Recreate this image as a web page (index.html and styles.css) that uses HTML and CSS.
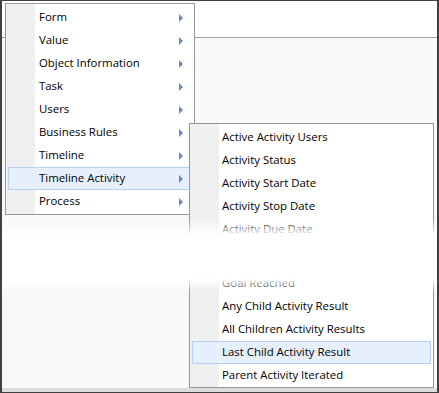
FILE: index.html
```html
<!DOCTYPE html>
<html>
<head>
<meta charset="utf-8">
<link rel="stylesheet" href="styles.css">
</head>
<body>
<div class="window">
  <div class="header"></div>
  <div class="content"></div>
  <div class="statusbar"></div>

  <div class="menu main-menu">
    <div class="item"><span class="label">Form</span><span class="arrow"></span></div>
    <div class="item"><span class="label">Value</span><span class="arrow"></span></div>
    <div class="item"><span class="label">Object Information</span><span class="arrow"></span></div>
    <div class="item"><span class="label">Task</span><span class="arrow"></span></div>
    <div class="item"><span class="label">Users</span><span class="arrow"></span></div>
    <div class="item"><span class="label">Business Rules</span><span class="arrow"></span></div>
    <div class="item"><span class="label">Timeline</span><span class="arrow"></span></div>
    <div class="item active"><span class="label">Timeline Activity</span><span class="arrow"></span></div>
    <div class="item"><span class="label">Process</span><span class="arrow"></span></div>
  </div>

  <div class="menu sub-menu">
    <div class="item"><span class="label">Active Activity Users</span></div>
    <div class="item"><span class="label">Activity Status</span></div>
    <div class="item"><span class="label">Activity Start Date</span></div>
    <div class="item"><span class="label">Activity Stop Date</span></div>
    <div class="item"><span class="label">Activity Due Date</span></div>
    <div class="cut"></div>
    <div class="item"><span class="label">Goal Reached</span></div>
    <div class="item"><span class="label">Any Child Activity Result</span></div>
    <div class="item"><span class="label">All Children Activity Results</span></div>
    <div class="item active"><span class="label">Last Child Activity Result</span></div>
    <div class="item"><span class="label">Parent Activity Iterated</span></div>
  </div>

  <div class="tear"></div>
</div>
</body>
</html>
```

FILE: styles.css
```css
html, body {
  margin: 0;
  padding: 0;
  background: #ffffff;
}

.window {
  position: relative;
  box-sizing: border-box;
  width: 439px;
  height: 393px;
  border-left: 2px solid #404040;
  border-right: 2px solid #404040;
  border-top: 1px solid #404040;
  border-bottom: 1px solid #404040;
  display: flex;
  flex-direction: column;
  background: #f9f9f9;
  font-family: "Open Sans", "Liberation Sans", sans-serif;
  font-size: 11.4px;
  color: #000;
}

.header {
  height: 36px;
  background: #ffffff;
  border-bottom: 1px solid #a0a0a0;
}

.content {
  flex: 1;
  background: #f9f9f9;
}

.statusbar {
  height: 4px;
  background: #dcdcdc;
}

.menu {
  position: absolute;
  box-sizing: border-box;
  background: #ffffff linear-gradient(to right, #f0f0f0 29px, #ffffff 29px);
  border: 1px solid #979797;
  padding: 2px 0 1px 0;
  display: flex;
  flex-direction: column;
}

.main-menu {
  left: 3px;
  top: 2px;
  width: 190px;
  height: 212px;
}

.main-menu .item {
  padding-left: 30px;
}

.sub-menu {
  left: 187px;
  top: 122px;
  width: 245px;
  height: 265px;
  padding-bottom: 0;
}

.sub-menu .item {
  padding-left: 29px;
}

.item {
  box-sizing: border-box;
  height: 23px;
  margin: 0 2px;
  display: flex;
  align-items: center;
  justify-content: space-between;
  border: 1px solid transparent;
  line-height: 1;
  white-space: nowrap;
}

.item.active {
  background: #e6f0fc;
  border-color: #b3d2f3;
}

.label {
  padding-bottom: 1px;
}

.arrow {
  width: 0;
  height: 0;
  margin-right: 8px;
  border-top: 4px solid transparent;
  border-bottom: 4px solid transparent;
  border-left: 4px solid #6a87c2;
}

.cut {
  height: 31px;
  flex: none;
}

.tear {
  position: absolute;
  left: 0;
  right: 0;
  top: 219px;
  height: 71px;
  background: linear-gradient(to bottom,
    rgba(255,255,255,0) 0px,
    #ffffff 15px,
    #ffffff 59px,
    rgba(255,255,255,0) 71px);
}
```
